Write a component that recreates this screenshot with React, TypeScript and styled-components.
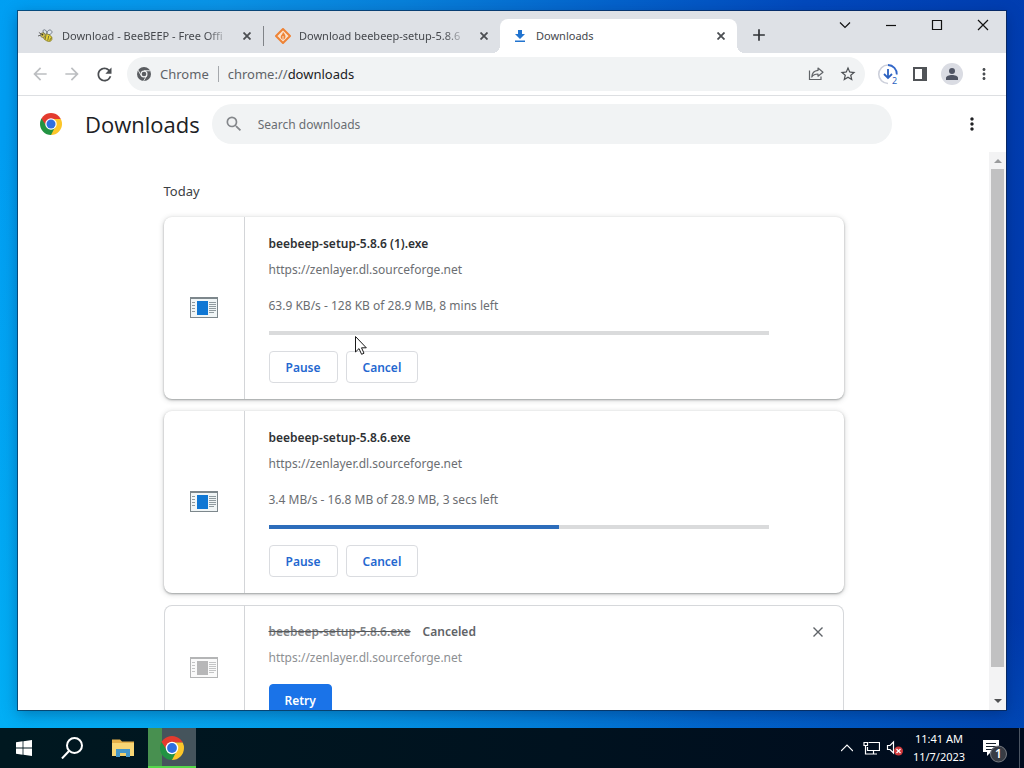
import React, { useId } from "react";
import styled, { createGlobalStyle } from "styled-components";
import {
  MdAdd,
  MdArrowBack,
  MdArrowForward,
  MdMoreVert,
  MdRefresh,
  MdSearch,
  MdStarBorder,
} from "react-icons/md";

const GlobalStyle = createGlobalStyle`
  *, *::before, *::after { box-sizing: border-box; }
  body {
    margin: 0;
    font-family: "Noto Sans", "Open Sans", sans-serif;
    font-size: 12px;
    color: #202124;
  }
  button, input { font: inherit; color: inherit; }
  button { border: 0; padding: 0; background: none; cursor: default; }
  h1, h2, h3, p { margin: 0; font-weight: 400; }
  svg { display: block; flex: none; }
`;

/* ---------- desktop ---------- */

const Desktop = styled.div`
  height: 100vh;
  display: flex;
  flex-direction: column;
  overflow: hidden;
  background:
    linear-gradient(25deg, rgba(0, 190, 250, 0.6), rgba(0, 190, 250, 0) 50%),
    linear-gradient(97deg, #009ff3 0%, #0a93e6 20%, #0880da 36%, #0462cb 55%, #0249bd 72%, #0038ab 100%);
`;

const Workspace = styled.main`
  flex: 1;
  min-height: 0;
  display: flex;
  padding: 10px 18px 18px;
`;

const BrowserWindow = styled.section`
  flex: 1;
  min-width: 0;
  display: flex;
  flex-direction: column;
  margin-top: 1px;
  background: #fff;
  box-shadow: 0 0 0 1px rgba(10, 30, 60, 0.6), 0 4px 14px rgba(0, 20, 60, 0.35);
`;

/* ---------- tab strip ---------- */

const TabStrip = styled.div`
  display: flex;
  height: 42px;
  padding-left: 8px;
  background: #dee1e6;
`;

const Tabs = styled.div`
  display: flex;
  align-items: flex-end;
  flex: 0 1 711px;
  min-width: 0;
`;

const Tab = styled.div<{ $active?: boolean; $divided?: boolean }>`
  position: relative;
  flex: 1;
  min-width: 0;
  height: 34px;
  display: flex;
  align-items: center;
  gap: 8px;
  padding: 0 8px 0 12px;
  border-radius: 8px 8px 0 0;
  background: ${(p) => (p.$active ? "#fff" : "transparent")};

  &::before, &::after {
    content: "";
    display: ${(p) => (p.$active ? "block" : "none")};
    position: absolute;
    bottom: 0;
    width: 8px;
    height: 8px;
  }
  &::before { left: -8px; background: radial-gradient(circle at 0 0, transparent 8px, #fff 8px); }
  &::after {
    right: ${(p) => (p.$divided ? "-1px" : "-8px")};
    background: radial-gradient(circle at 100% 0, transparent 8px, #fff 8px);
  }
  ${(p) =>
    p.$divided &&
    `&::after {
      display: block;
      width: 1px;
      height: 20px;
      bottom: 7px;
      background: #808388;
    }`}
`;

const TabTitle = styled.span<{ $fade?: boolean }>`
  flex: 1;
  overflow: hidden;
  white-space: nowrap;
  font-size: 11px;
  line-height: 16px;
  color: #45484d;
  mask-image: ${(p) => (p.$fade ? "linear-gradient(to right, #000 calc(100% - 24px), transparent)" : "none")};
`;

const IconButton = styled.button<{ $size?: number; $tone?: string }>`
  flex: none;
  display: grid;
  place-items: center;
  width: ${(p) => p.$size ?? 32}px;
  height: ${(p) => p.$size ?? 32}px;
  color: ${(p) => p.$tone ?? "#4b4e52"};
`;

const NewTab = styled(IconButton)`
  align-self: flex-end;
  margin: 0 0 2px 6px;
`;

const CaptionButtons = styled.div`
  display: flex;
  margin-left: auto;
`;

const CaptionButton = styled.button`
  width: 46px;
  height: 28px;
  display: grid;
  place-items: center;
  color: #111;
`;

/* ---------- toolbar ---------- */

const Toolbar = styled.div`
  display: flex;
  align-items: center;
  height: 43px;
  padding: 0 6px;
  border-bottom: 1px solid #dddfe2;
`;

const Omnibox = styled.div`
  flex: 1;
  min-width: 0;
  display: flex;
  align-items: center;
  height: 34px;
  margin: 0 7px;
  padding: 0 1px 0 10px;
  border-radius: 17px;
  background: #f1f3f4;
  font-size: 13px;
  line-height: 20px;
  color: #5f6368;
`;

const SiteChip = styled.span`
  padding: 0 9px;
  margin-right: 9px;
  border-right: 1px solid #a5a8ac;
  line-height: 16px;
`;

const Url = styled.span`
  flex: 1;
  min-width: 0;
  overflow: hidden;
  white-space: nowrap;
  b { font-weight: 400; color: #202124; }
`;

const Avatar = styled.span`
  display: grid;
  place-items: center;
  width: 22px;
  height: 22px;
  border-radius: 50%;
  background: #dadce3;
`;

/* ---------- downloads page ---------- */

const PageHeader = styled.header`
  display: flex;
  align-items: center;
  height: 56px;
  padding: 0 18px 0 22px;
`;

const PageTitle = styled.h1`
  margin: 0 12px 0 23px;
  font-family: "Open Sans", "Noto Sans", sans-serif;
  font-size: 22px;
  line-height: 28px;
  font-weight: 500;
`;

const SearchBox = styled.label`
  flex: 0 1 680px;
  display: flex;
  align-items: center;
  gap: 14px;
  height: 40px;
  padding: 0 12px;
  border-radius: 20px;
  background: #f1f3f4;
  color: #84878b;

  input {
    flex: 1;
    min-width: 0;
    border: 0;
    padding: 1px 0 0;
    outline: 0;
    background: none;
    line-height: 20px;
  }
  input::placeholder { color: #696d72; opacity: 1; }
`;

const HeaderMenu = styled(IconButton)`
  margin-left: auto;
`;

const PageBody = styled.div`
  flex: 1;
  min-height: 0;
  display: flex;
`;

const Scroller = styled.div`
  flex: 1;
  min-width: 0;
  overflow: hidden;
  padding: 0 24px;
`;

const DownloadList = styled.div`
  max-width: 680px;
  margin: 0 auto;
  padding-top: 29px;
  display: flex;
  flex-direction: column;
  gap: 12px;
`;

const DayHeading = styled.h2`
  margin-bottom: 4px;
  font-size: 13px;
  line-height: 20px;
  color: #3c4043;
`;

const Card = styled.article<{ $raised?: boolean }>`
  display: flex;
  border-radius: 8px;
  background: #fff;
  box-shadow: ${(p) =>
    p.$raised
      ? "0 1px 2px rgba(60,64,67,.4), 0 1px 5px 1px rgba(60,64,67,.18)"
      : "inset 0 0 0 1px #d6d8db"};
`;

const CardIcon = styled.div`
  flex: 0 0 81px;
  display: grid;
  place-items: center;
  padding-bottom: 2px;
  border-right: 1px solid #d3d5d8;
`;

const CardBody = styled.div`
  flex: 1;
  min-width: 0;
  display: flex;
  flex-direction: column;
  padding: 17px 75px 16px 24px;
  line-height: 20px;
  color: #6b6e72;
`;

const FileName = styled.h3<{ $gone?: boolean }>`
  display: flex;
  gap: 12px;
  margin-bottom: 6px;
  font-size: 12px;
  font-weight: 600;
  color: ${(p) => (p.$gone ? "#606367" : "#2e3134")};

  s { color: #808285; text-decoration-color: #55585b; }
`;

const SourceLink = styled.a<{ $gone?: boolean }>`
  align-self: flex-start;
  color: ${(p) => (p.$gone ? "#8d9093" : "#6b6e72")};
  text-decoration: none;
`;

const Status = styled.p`
  margin-top: 16px;
`;

const Progress = styled.progress`
  appearance: none;
  display: block;
  width: 100%;
  height: 4px;
  margin-top: 15px;
  border: 0;
  background: #dadbdc;
  &::-webkit-progress-bar { background: #dadbdc; border-radius: 0 2px 2px 0; }
  &::-webkit-progress-value { background: #2d6dbb; }
`;

const Actions = styled.div`
  display: flex;
  gap: 8px;
  margin-top: 16px;
`;

const ActionButton = styled.button<{ $primary?: boolean }>`
  height: 32px;
  padding: 1px ${(p) => (p.$primary ? 15 : 16)}px 0;
  border: 1px solid ${(p) => (p.$primary ? "#1a73e8" : "#dadce0")};
  border-radius: 4px;
  background: ${(p) => (p.$primary ? "#1a73e8" : "#fff")};
  color: ${(p) => (p.$primary ? "#fff" : "#2468d0")};
  font-weight: 600;
`;

const RemoveButton = styled(IconButton)`
  margin: 11px 10px 0 -75px;
`;

const ScrollBar = styled.div`
  flex: 0 0 17px;
  display: flex;
  flex-direction: column;
  align-items: center;
  background: #f3f3f4;
`;

const ScrollArrow = styled.button`
  width: 17px;
  height: 17px;
  display: grid;
  place-items: center;
`;

const ScrollTrack = styled.div`
  flex: 1;
  width: 13px;
  padding-bottom: 26px;
`;

const ScrollThumb = styled.div`
  height: 100%;
  background: #c1c1c2;
`;

/* ---------- taskbar ---------- */

const TaskBar = styled.footer`
  height: 40px;
  display: flex;
  align-items: stretch;
  color: #fff;
  background: linear-gradient(to right, #001820, #00121f 55%, #000b1e);
`;

const TaskButton = styled.button<{ $running?: boolean }>`
  width: 48px;
  display: grid;
  place-items: center;
  ${(p) =>
    p.$running &&
    `background: linear-gradient(to right, #489050 14px, #45545c 14px);
     border-bottom: 2px solid #55d84a;
     padding-top: 2px;`}
`;

const PinnedApps = styled.div`
  display: flex;
  gap: 1px;
  margin-left: 3px;
`;

const Tray = styled.div`
  display: flex;
  align-items: center;
  margin-left: auto;
`;

const TrayButton = styled.button<{ $wide?: boolean }>`
  width: ${(p) => (p.$wide ? 48 : 24)}px;
  height: 40px;
  display: grid;
  place-items: center;
`;

const Clock = styled.time`
  width: 64px;
  text-align: center;
  font-size: 11px;
  line-height: 18px;
`;

const ShowDesktop = styled.button`
  width: 5px;
  height: 40px;
  border-left: 1px solid #4b5563;
`;

const Pointer = styled.svg`
  position: absolute;
  left: 355px;
  top: 336px;
`;

/* ---------- drawings ---------- */

function ChromeLogo({ size, grey }: { size: number; grey?: boolean }) {
  const id = useId();
  const c = grey
    ? { r: "#5a5d61", y: "#5a5d61", g: "#5a5d61", ring: "#f1f3f4", b: "#5a5d61" }
    : { r: "#e33b2e", y: "#fcc629", g: "#229342", ring: "#fff", b: "#2f6fe0" };
  return (
    <svg width={size} height={size} viewBox="0 0 48 48" aria-hidden="true">
      <clipPath id={id}>
        <circle cx="24" cy="24" r="24" />
      </clipPath>
      <g clipPath={`url(#${id})`}>
        <path d="M24 13H48V-2H0V12L14.5 29.5Z" fill={c.r} />
        <path d="M24 13H50V50H20L33.5 29.5Z" fill={c.y} />
        <path d="M3.2 12 14.5 29.5 24 35 33.5 29.5 23 50H-2V12Z" fill={c.g} />
        {grey && (
          <path d="M24 13H47M14.5 29.5 3.2 10M33.5 29.5 22 49" stroke="#f1f3f4" strokeWidth="3" />
        )}
      </g>
      <circle cx="24" cy="24" r={grey ? 12 : 12.5} fill={c.ring} />
      <circle cx="24" cy="24" r={grey ? 8 : 9.8} fill={c.b} />
    </svg>
  );
}

const BeeIcon = () => (
  <svg width="16" height="16" viewBox="0 0 18 16" aria-hidden="true">
    <path d="M8 6C5 4 5 1 7 1s3 2 3 5M10 6c0-4 3-6 5-4s0 4-4 5" fill="#dfe6ee" stroke="#69727e" />
    <ellipse cx="11" cy="10" rx="5" ry="3.6" fill="#e8d436" stroke="#8d8434" transform="rotate(25 11 10)" />
    <path d="M9 7 8 12M12 8l-1 5M15 10l-2 3" stroke="#6b6530" />
    <circle cx="5.500" cy="7" r="2.600" fill="#e4d24a" stroke="#77735a" />
    <path d="M1 4l3 2M0 8l3-1" stroke="#555" />
    <circle cx="5" cy="6.500" r="1" fill="#333" />
  </svg>
);

const SourceForgeIcon = () => (
  <svg width="16" height="16" viewBox="0 0 16 16" aria-hidden="true">
    <path d="M8 1 15 8 8 15 1 8Z" fill="#fbe3cd" stroke="#ee8336" strokeWidth="2" strokeLinejoin="round" />
    <path d="M8 4c2.500 2.500 2.800 4 2.300 5.500C10 10.700 9 11.500 8 11.500S5.700 10.600 5.700 9C5.700 7 7.800 6.500 8 4Z" fill="#ee8336" />
    <path d="M8 8v3" stroke="#fbe3cd" />
  </svg>
);

const DownloadFavicon = () => (
  <svg width="16" height="16" viewBox="0 0 16 16" aria-hidden="true">
    <path d="M6 2h4v4h3L8 11 3 6h3ZM3 12.500h10v1.500H3Z" fill="#2274cf" />
  </svg>
);

const ShareIcon = () => (
  <svg width="16" height="16" viewBox="0 0 16 16" fill="none" stroke="#606367" aria-hidden="true">
    <path d="M1.500 4.500v9h11.500v-3" strokeWidth="1.200" />
    <path d="M10 2 15 6.200 10 10.200V8C7 8 5 9 3.800 11 4 7.500 6 4.800 10 4.400Z" strokeWidth="1.200" strokeLinejoin="round" />
  </svg>
);

const DownloadProgressIcon = () => (
  <svg width="24" height="30" viewBox="-1 -3 24 30" fill="none" aria-hidden="true">
    <path d="M11 21.500A9 9 0 1 1 11 3" stroke="#cdd0db" strokeWidth="1.600" />
    <path d="M11 3A9 9 0 0 1 19.800 12.500" stroke="#3367c8" strokeWidth="1.800" />
    <path d="M11 7v9M7 12 11 16l4-4" stroke="#2c62c0" strokeWidth="1.800" />
    <text x="15" y="22" fontSize="9" fill="#2c62c0">2</text>
  </svg>
);

const SidePanelIcon = () => (
  <svg width="14" height="14" viewBox="0 0 14 14" aria-hidden="true">
    <path d="M0 0H14V14H0ZM2 2V12H9V2Z" fill="#505357" fillRule="evenodd" />
  </svg>
);

const PersonIcon = () => (
  <svg width="14" height="14" viewBox="0 0 14 14" fill="#4f5463" aria-hidden="true">
    <circle cx="7" cy="4" r="3" />
    <path d="M1 13V11C1 9 4 8 7 8s6 1 6 3v2Z" />
  </svg>
);

function ProgramIcon({ dim }: { dim?: boolean }) {
  const frame = dim ? "#b4b5b6" : "#7d878c";
  return (
    <svg width="28" height="21" viewBox="0 0 28 21" aria-hidden="true">
      <rect x="0.500" y="0.500" width="27" height="20" fill={dim ? "#fafafa" : "#f0f5f6"} stroke={frame} />
      <path d="M1 1.500H27" stroke={frame} />
      <rect x="7" y="4" width="11" height="14" fill={dim ? "#b7b7b8" : "#0f77d4"} />
      <path
        d="M2 5.500h3M2 8.500h3M2 11.500h3M2 14.500h3M19 5.500h7M19 7.500h7M19 9.500h7M19 11.500h7M19 13.500h7M19 15.500h5"
        stroke={dim ? "#c3c4c5" : "#8f9a9f"}
      />
    </svg>
  );
}

const CloseGlyph = ({ size = 8, weight = 1.8 }: { size?: number; weight?: number }) => (
  <svg width={size} height={size} viewBox={`0 0 ${size} ${size}`} stroke="currentColor" strokeWidth={weight} aria-hidden="true">
    <path d={`M0.500 0.500 ${size - 0.5} ${size - 0.5}M${size - 0.5} 0.500 0.500 ${size - 0.5}`} />
  </svg>
);

const CaptionGlyph = ({ d }: { d: string }) => (
  <svg width="12" height="12" viewBox="0 0 12 12" fill="none" stroke="currentColor" strokeWidth="1.200" aria-hidden="true">
    <path d={d} />
  </svg>
);

const WindowsLogo = () => (
  <svg width="16" height="16" viewBox="0 0 16 16" fill="#fff" aria-hidden="true">
    <path d="M0 2.300 6.600 1.300V7.600H0ZM7.400 1.200 16 0V7.600H7.400ZM0 8.400H6.600V14.700L0 13.700ZM7.400 8.400H16V16L7.400 14.800Z" />
  </svg>
);

const FinderGlyph = () => (
  <svg width="22" height="22" viewBox="0 0 22 22" fill="none" stroke="#fff" strokeWidth="2" aria-hidden="true">
    <circle cx="13.500" cy="8.500" r="7.500" />
    <path d="M8 14 1 21.500" />
  </svg>
);

const FolderIcon = () => (
  <svg width="22" height="20" viewBox="0 0 22 20" aria-hidden="true">
    <path d="M0 1.500H8L10 3.500H22V18H0Z" fill="#e3b04a" />
    <path d="M0 5H22V18H0Z" fill="#f7d675" />
    <path d="M4 11H18V19H14V15H8V19H4Z" fill="#4496c8" />
    <path d="M8 15h6v3H8Z" fill="#f1cf6b" />
  </svg>
);

const NetworkIcon = () => (
  <svg width="17" height="14" viewBox="0 0 17 14" fill="none" stroke="#fff" aria-hidden="true">
    <path d="M5.500 1.500H16.500V9.500H4.500V6M10.500 9.500V13M6 13H14" strokeWidth="1.200" />
    <path d="M1 1.500H4.500V4.500H1ZM2.500 4.500V13H6" strokeWidth="1.200" />
  </svg>
);

const MutedIcon = () => (
  <svg width="18" height="16" viewBox="0 0 18 16" fill="none" aria-hidden="true">
    <path d="M1.500 5.500H4L7.500 2V13L4 9.500H1.500Z" stroke="#fff" strokeWidth="1.200" />
    <circle cx="12.500" cy="11" r="4.500" fill="#d0393c" />
    <path d="M10.500 9l4 4M14.500 9l-4 4" stroke="#fff" strokeWidth="1.200" />
  </svg>
);

const NotificationsIcon = () => (
  <svg width="26" height="30" viewBox="0 0 26 30" aria-hidden="true">
    <path d="M1 7H17V19H9L5 23V19H1Z" fill="#fff" />
    <path d="M4 10.500H14M4 13.500H14M4 16.500H11" stroke="#16202c" strokeWidth="1.200" />
    <circle cx="16.500" cy="21" r="8" fill="#383c44" stroke="#777b82" />
    <text x="16.500" y="25" textAnchor="middle" fontSize="12" fontWeight="600" fill="#fff">1</text>
  </svg>
);

/* ---------- page ---------- */

const tabs = [
  { title: "Download - BeeBEEP - Free Offi", icon: <BeeIcon />, divided: true },
  { title: "Download beebeep-setup-5.8.6", icon: <SourceForgeIcon /> },
  { title: "Downloads", icon: <DownloadFavicon />, active: true },
];

const source = "https://zenlayer.dl.sourceforge.net";

const running = [
  { name: "beebeep-setup-5.8.6 (1).exe", status: "63.9 KB/s - 128 KB of 28.9 MB, 8 mins left", done: 0 },
  { name: "beebeep-setup-5.8.6.exe", status: "3.4 MB/s - 16.8 MB of 28.9 MB, 3 secs left", done: 58 },
];

export default function App() {
  return (
    <Desktop>
      <GlobalStyle />
      <Workspace>
        <BrowserWindow>
          <TabStrip>
            <Tabs>
              {tabs.map((t) => (
                <Tab key={t.title} $active={t.active} $divided={t.divided}>
                  {t.icon}
                  <TabTitle $fade={!t.active}>{t.title}</TabTitle>
                  <IconButton $size={16} aria-label={`Close ${t.title}`}>
                    <CloseGlyph />
                  </IconButton>
                </Tab>
              ))}
            </Tabs>
            <NewTab aria-label="New tab" $tone="#2f3236">
              <MdAdd size={20} />
            </NewTab>
            <CaptionButtons>
              <CaptionButton aria-label="Search tabs"><CaptionGlyph d="M1 3.500 6 8.500 11 3.500" /></CaptionButton>
              <CaptionButton aria-label="Minimize"><CaptionGlyph d="M1 6.500H11" /></CaptionButton>
              <CaptionButton aria-label="Maximize"><CaptionGlyph d="M1.500 1.500H10.500V10.500H1.500Z" /></CaptionButton>
              <CaptionButton aria-label="Close window"><CaptionGlyph d="M1 1 11 11M11 1 1 11" /></CaptionButton>
            </CaptionButtons>
          </TabStrip>

          <Toolbar>
            <IconButton $tone="#bcbec1" aria-label="Back"><MdArrowBack size={20} /></IconButton>
            <IconButton $tone="#bcbec1" aria-label="Forward"><MdArrowForward size={20} /></IconButton>
            <IconButton aria-label="Reload"><MdRefresh size={21} /></IconButton>
            <Omnibox>
              <ChromeLogo size={14} grey />
              <SiteChip>Chrome</SiteChip>
              <Url>chrome://<b>downloads</b></Url>
              <IconButton aria-label="Share"><ShareIcon /></IconButton>
              <IconButton aria-label="Bookmark this tab"><MdStarBorder size={18} /></IconButton>
            </Omnibox>
            <IconButton aria-label="Downloads in progress"><DownloadProgressIcon /></IconButton>
            <IconButton aria-label="Side panel"><SidePanelIcon /></IconButton>
            <IconButton aria-label="Profile"><Avatar><PersonIcon /></Avatar></IconButton>
            <IconButton aria-label="Browser menu"><MdMoreVert size={18} /></IconButton>
          </Toolbar>

          <PageHeader>
            <ChromeLogo size={22} />
            <PageTitle>Downloads</PageTitle>
            <SearchBox>
              <MdSearch size={20} aria-hidden="true" />
              <input type="text" placeholder="Search downloads" aria-label="Search downloads" />
            </SearchBox>
            <HeaderMenu $tone="#202124" aria-label="More actions"><MdMoreVert size={20} /></HeaderMenu>
          </PageHeader>

          <PageBody>
            <Scroller>
              <DownloadList>
                <DayHeading>Today</DayHeading>
                {running.map((d) => (
                  <Card key={d.name} $raised>
                    <CardIcon><ProgramIcon /></CardIcon>
                    <CardBody>
                      <FileName>{d.name}</FileName>
                      <SourceLink href={source}>{source}</SourceLink>
                      <Status>{d.status}</Status>
                      <Progress value={d.done} max={100} aria-label={`${d.name} progress`} />
                      <Actions>
                        <ActionButton>Pause</ActionButton>
                        <ActionButton>Cancel</ActionButton>
                      </Actions>
                    </CardBody>
                  </Card>
                ))}
                <Card>
                  <CardIcon><ProgramIcon dim /></CardIcon>
                  <CardBody>
                    <FileName $gone><s>beebeep-setup-5.8.6.exe</s> Canceled</FileName>
                    <SourceLink $gone href={source}>{source}</SourceLink>
                    <Actions>
                      <ActionButton $primary>Retry</ActionButton>
                    </Actions>
                  </CardBody>
                  <RemoveButton aria-label="Remove from list" $tone="#5f6368">
                    <CloseGlyph size={10} weight={1.4} />
                  </RemoveButton>
                </Card>
              </DownloadList>
            </Scroller>
            <ScrollBar>
              <ScrollArrow aria-label="Scroll up">
                <svg width="8" height="5" viewBox="0 0 8 5"><path d="M0 5 4 1 8 5Z" fill="#9a9b9d" /></svg>
              </ScrollArrow>
              <ScrollTrack><ScrollThumb /></ScrollTrack>
              <ScrollArrow aria-label="Scroll down">
                <svg width="8" height="5" viewBox="0 0 8 5"><path d="M0 0 4 4 8 0Z" fill="#505153" /></svg>
              </ScrollArrow>
            </ScrollBar>
          </PageBody>
        </BrowserWindow>
      </Workspace>

      <TaskBar>
        <TaskButton aria-label="Start"><WindowsLogo /></TaskButton>
        <TaskButton aria-label="Search"><FinderGlyph /></TaskButton>
        <PinnedApps>
          <TaskButton aria-label="File Explorer"><FolderIcon /></TaskButton>
          <TaskButton $running aria-label="Google Chrome"><ChromeLogo size={24} /></TaskButton>
        </PinnedApps>
        <Tray>
          <TrayButton aria-label="Show hidden icons">
            <CaptionGlyph d="M0 9 6 3 12 9" />
          </TrayButton>
          <TrayButton aria-label="Network"><NetworkIcon /></TrayButton>
          <TrayButton aria-label="Volume muted"><MutedIcon /></TrayButton>
          <Clock dateTime="2023-11-07T11:41">
            11:41 AM
            <br />
            11/7/2023
          </Clock>
          <TrayButton $wide aria-label="Notifications"><NotificationsIcon /></TrayButton>
        </Tray>
        <ShowDesktop aria-label="Show desktop" />
      </TaskBar>

      <Pointer width="12" height="19" viewBox="0 0 12 19" aria-hidden="true">
        <path d="M0.500 0.500V16L4 12.600 6.600 18.300 9 17.200 6.500 11.800H11.300Z" fill="#fff" stroke="#1a1a1a" />
      </Pointer>
    </Desktop>
  );
}
